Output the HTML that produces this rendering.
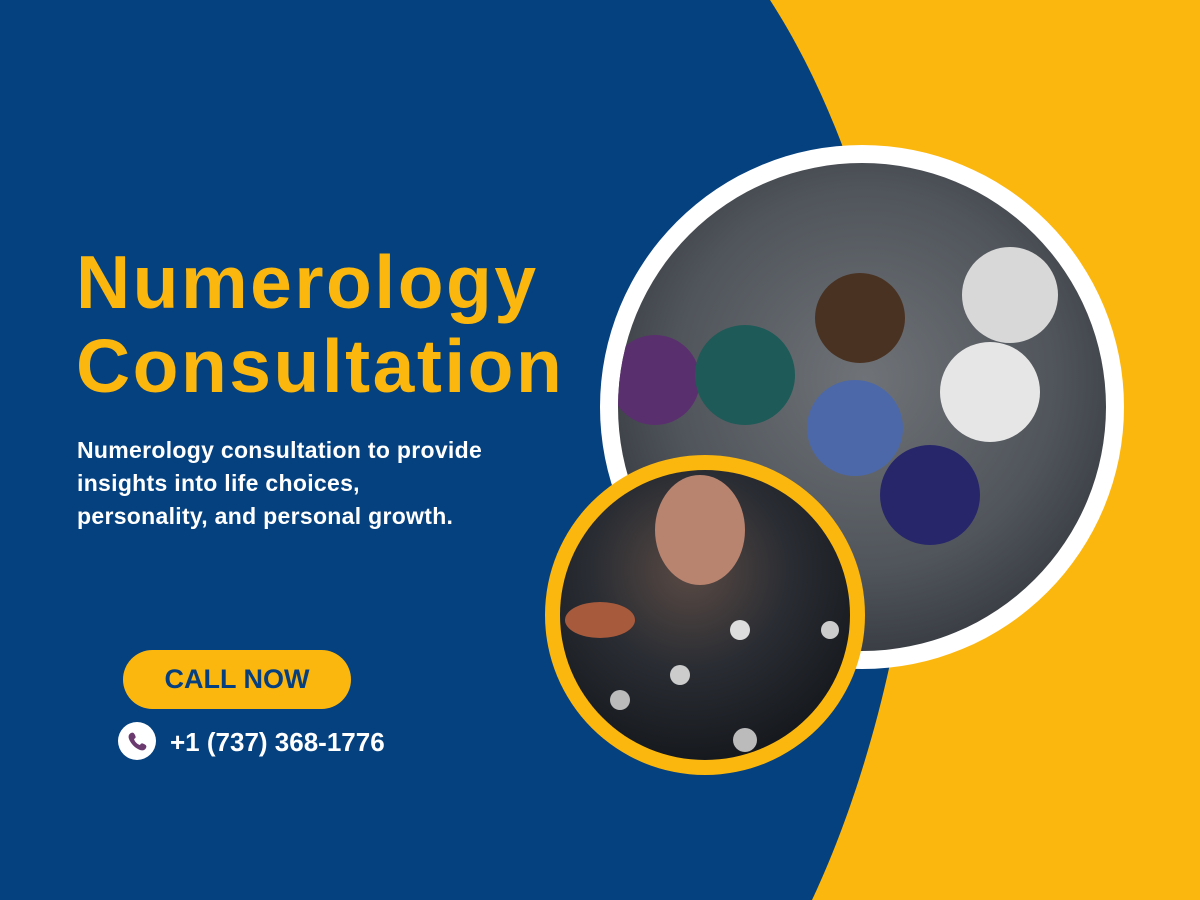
<!DOCTYPE html>
<html><head><style>
body{margin:0;width:1200px;height:900px;overflow:hidden;background:#05417f;font-family:"Liberation Sans",sans-serif;position:relative}
.h{position:absolute;left:76px;top:240px;color:#fcb70f;font-weight:bold;font-size:75px;line-height:84px;letter-spacing:2.5px}
.p{position:absolute;left:77px;top:434px;color:#fff;font-weight:bold;font-size:23px;line-height:33px;width:480px;letter-spacing:0.3px}
.btn{position:absolute;left:123px;top:650px;width:228px;height:59px;border-radius:30px;background:#fcb70f;color:#053f80;font-weight:bold;font-size:27px;line-height:59px;text-align:center}
.ph{position:absolute;left:118px;top:722px;width:38px;height:38px;border-radius:50%;background:#fff}
.num{position:absolute;left:170px;top:727px;color:#fff;font-weight:bold;font-size:26px}
</style></head><body>
<svg width="1200" height="900" style="position:absolute;left:0;top:0">
<path d="M770 0 C880 170 935 440 895 640 C875 740 845 830 812 900 L1200 900 L1200 0 Z" fill="#fcb70f"/>
<defs>
<radialGradient id="g1" cx="50%" cy="45%" r="60%"><stop offset="0" stop-color="#6f7378"/><stop offset="0.6" stop-color="#50555b"/><stop offset="1" stop-color="#2e3238"/></radialGradient>
<radialGradient id="g2" cx="45%" cy="35%" r="65%"><stop offset="0" stop-color="#5a4a44"/><stop offset="0.5" stop-color="#2a2d33"/><stop offset="1" stop-color="#15181d"/></radialGradient>
<clipPath id="c1"><circle cx="862" cy="407" r="244"/></clipPath>
<clipPath id="c2"><circle cx="705" cy="615" r="145"/></clipPath>
</defs>
<circle cx="862" cy="407" r="262" fill="#fff"/>
<g clip-path="url(#c1)">
<rect x="600" y="140" width="530" height="530" fill="url(#g1)"/>
<circle cx="655" cy="380" r="45" fill="#5a2f6e"/>
<circle cx="745" cy="375" r="50" fill="#1e5a57"/>
<circle cx="860" cy="318" r="45" fill="#4a3222"/>
<circle cx="1010" cy="295" r="48" fill="#d8d8d8"/>
<circle cx="990" cy="392" r="50" fill="#e6e6e6"/>
<circle cx="855" cy="428" r="48" fill="#4c68a8"/>
<circle cx="930" cy="495" r="50" fill="#27266a"/>
</g>
<circle cx="705" cy="615" r="160" fill="#fcb70f"/>
<g clip-path="url(#c2)">
<rect x="555" y="465" width="300" height="300" fill="url(#g2)"/>
<ellipse cx="700" cy="530" rx="45" ry="55" fill="#b88470"/>
<ellipse cx="600" cy="620" rx="35" ry="18" fill="#a85a3c"/>
<circle cx="740" cy="630" r="10" fill="#ddd"/><circle cx="680" cy="675" r="10" fill="#ccc"/><circle cx="830" cy="630" r="9" fill="#ccc"/><circle cx="745" cy="740" r="12" fill="#bbb"/><circle cx="620" cy="700" r="10" fill="#bbb"/>
</g>
</svg>
<div class="h">Numerology<br>Consultation</div>
<div class="p">Numerology consultation to provide<br>insights into life choices,<br>personality, and personal growth.</div>
<div class="btn">CALL NOW</div>
<div class="ph"><svg width="38" height="38" viewBox="0 0 38 38"><path d="M13 11c2-1 3 0 4 2s1 3-1 4c1 3 3 5 6 6 1-2 2-2 4-1s3 2 2 4c-1 2-3 3-6 2-5-2-9-6-11-11-1-3 0-5 2-6z" fill="#6b3a6f"/></svg></div>
<div class="num">+1 (737) 368-1776</div>
</body></html>
